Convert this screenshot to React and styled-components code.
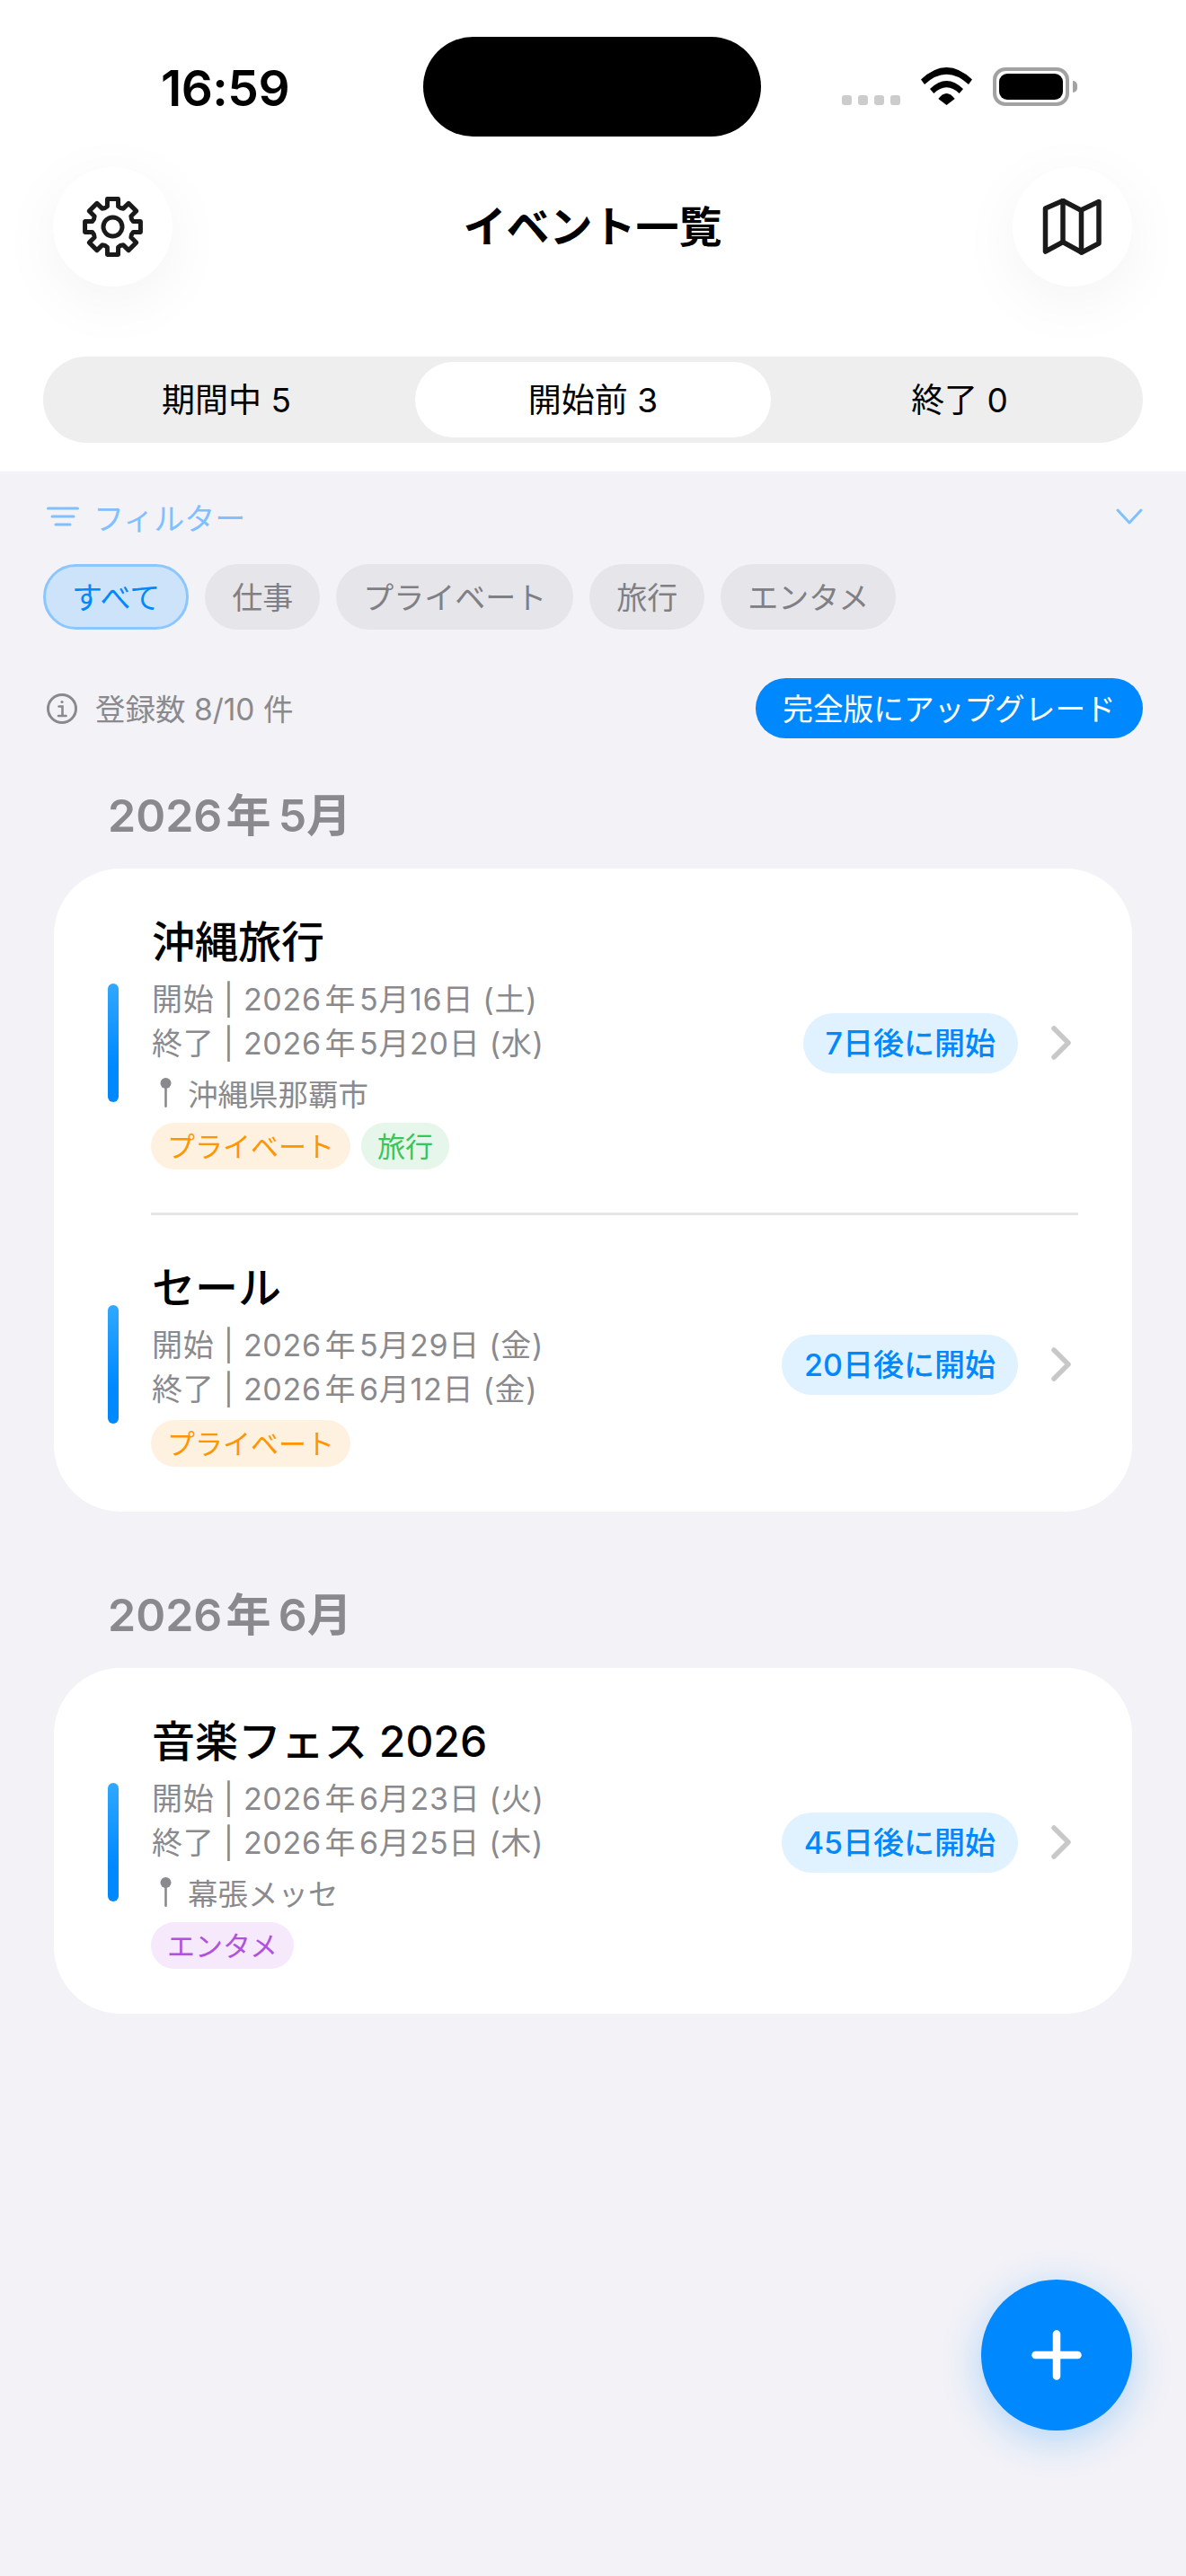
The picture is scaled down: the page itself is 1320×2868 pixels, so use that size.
import React from "react";
import styled, { createGlobalStyle } from "styled-components";

const Global = createGlobalStyle`
  html, body { margin: 0; padding: 0; background: #f2f2f7; }
  body { font-family: Inter, "Noto Sans CJK JP", sans-serif; }
  * { box-sizing: border-box; }
`;

const Page = styled.div`
  position: relative;
  width: 1320px;
  height: 2868px;
  background: #f2f2f7;
  overflow: hidden;
`;
const Top = styled.header`
  background: #fff;
  height: 525px;
  padding-top: 41px;
`;
const StatusBar = styled.div`
  display: grid;
  grid-template-columns: 471px 376px 1fr;
  height: 111px;
`;
const Time = styled.div`
  font-size: 55px;
  font-weight: 600;
  letter-spacing: -0.5px;
  line-height: 60px;
  color: #000;
  text-align: center;
  padding: 27px 0 0 30px;
`;
const Island = styled.div`
  background: #000;
  border-radius: 56px;
`;
const StatusIcons = styled.div`
  display: flex;
  align-items: flex-start;
  padding: 34px 0 0 90px;
`;
const Dots = styled.div`
  display: flex;
  gap: 7px;
  margin-top: 31px;
  margin-right: 23px;
`;
const Dot = styled.span`
  width: 11px;
  height: 11px;
  border-radius: 3px;
  background: #ccc;
`;
const Battery = styled.div`
  position: relative;
  width: 85px;
  height: 43px;
  margin-left: 23px;
  border: 4px solid #a2a2a2;
  border-radius: 14px;
  padding: 3px;
  &::after {
    content: "";
    position: absolute;
    right: -13px;
    top: 11px;
    width: 5px;
    height: 13px;
    background: #a2a2a2;
    border-radius: 0 5px 5px 0;
  }
`;
const BatteryFill = styled.div`
  width: 100%;
  height: 100%;
  background: #000;
  border-radius: 9px;
`;
const HeaderRow = styled.div`
  display: flex;
  align-items: center;
  justify-content: space-between;
  margin: 34px 60px 0 59px;
  height: 133px;
`;
const RoundButton = styled.button`
  width: 133px;
  height: 133px;
  border: 0;
  padding: 0;
  border-radius: 50%;
  background: #fff;
  color: #1a1a1a;
  display: flex;
  align-items: center;
  justify-content: center;
  box-shadow: 0 16px 70px rgba(0, 0, 0, 0.05);
`;
const Title = styled.h1`
  margin: 0 0 7px;
  font-size: 48px;
  font-weight: 600;
  color: #000;
`;
const Segment = styled.div`
  display: grid;
  grid-template-columns: repeat(3, 1fr);
  margin: 78px 48px 0;
  height: 96px;
  border-radius: 48px;
  background: #eeeeee;
`;
const SegmentItem = styled.div`
  margin: 6px;
  padding-bottom: 5px;
  border-radius: 42px;
  background: ${(p) => (p.$active ? "#fff" : "transparent")};
  display: flex;
  align-items: center;
  justify-content: center;
  font-size: 37px;
  font-weight: 400;
  color: #000;
`;
const Content = styled.main`
  padding: 25px 48px 0;
`;
const FilterRow = styled.div`
  display: flex;
  align-items: center;
  height: 50px;
  color: #80c0ff;
  font-size: 34px;
  padding: 0 0 0 4px;
`;
const FilterLabel = styled.span`
  flex: 1;
  margin-left: 16px;
`;
const Chips = styled.div`
  display: flex;
  gap: 18px;
  margin-top: 28px;
`;
const Chip = styled.div`
  height: 73px;
  padding: 0 ${(p) => (p.$active ? "29px" : "30px")} 3px;
  border-radius: 37px;
  display: flex;
  align-items: center;
  font-size: 34px;
  background: ${(p) => (p.$active ? "#cce3f9" : "#e5e5ea")};
  border: ${(p) => (p.$active ? "3px solid #8cc6ff" : "0")};
  color: ${(p) => (p.$active ? "#0088ff" : "#808084")};
`;
const InfoRow = styled.div`
  display: flex;
  align-items: center;
  margin-top: 54px;
  height: 67px;
`;
const InfoIcon = styled.svg`
  margin-left: 3px;
`;
const InfoText = styled.span`
  flex: 1;
  margin-left: 19px;
  padding-bottom: 2px;
  font-size: 33.5px;
  color: #8a8a8e;
`;
const Upgrade = styled.button`
  height: 67px;
  width: 431px;
  border: 0;
  border-radius: 34px;
  background: #0088ff;
  color: #fff;
  font-family: inherit;
  font-size: 33.7px;
  padding: 0 0 2px;
`;
const Month = styled.h2`
  margin: ${(p) => p.$mt}px 0 29px 72px;
  height: 60px;
  line-height: 60px;
  font-size: 50px;
  font-weight: 600;
  color: #8a8a8e;
`;
const Card = styled.section`
  margin: 0 -36px 0 12px;
  width: 1200px;
  border-radius: 74px;
  background: #fff;
`;
const Row = styled.div`
  display: flex;
  align-items: center;
  padding: ${(p) => p.$top}px 67px ${(p) => p.$bottom}px 60px;
`;
const Divider = styled.div`
  height: 3px;
  margin: 0 60px 0 108px;
  background: #e5e5e5;
`;
const Bar = styled.div`
  width: 12px;
  height: 132px;
  border-radius: 6px;
  margin-right: 37px;
  background: linear-gradient(180deg, #30a8ff 0%, #0088ff 70%);
`;
const Info = styled.div`
  flex: 1;
`;
const EventTitle = styled.div`
  height: 58px;
  line-height: 58px;
  font-size: 48px;
  font-weight: 500;
  color: #000;
`;
const Dates = styled.div`
  margin-top: 10px;
  font-size: 34px;
  letter-spacing: 0.7px;
  line-height: 49px;
  color: #8a8a8e;
`;
const Location = styled.div`
  display: flex;
  align-items: center;
  gap: 17px;
  height: 44px;
  margin-top: 10px;
  padding: 0 0 4px 8px;
  font-size: 33.5px;
  color: #8a8a8e;
`;
const Tags = styled.div`
  display: flex;
  gap: 12px;
  margin-top: 10px;
  margin-left: -1px;
`;
const Tag = styled.span`
  height: 52px;
  padding: 0 18px 4px;
  border-radius: 26px;
  display: flex;
  align-items: center;
  font-size: 31px;
  color: ${(p) => p.$fg};
  background: ${(p) => p.$bg};
`;
const Pill = styled.div`
  height: 67px;
  padding: 0 25px 4px;
  border-radius: 34px;
  display: flex;
  align-items: center;
  font-size: 34px;
  font-weight: 500;
  color: #0088ff;
  background: #e0f1ff;
`;
const Chevron = styled.svg`
  margin-left: 36px;
`;
const Fab = styled.button`
  position: absolute;
  left: 1092px;
  top: 2538px;
  width: 168px;
  height: 168px;
  border: 0;
  padding: 0;
  border-radius: 50%;
  background: #0088ff;
  display: flex;
  align-items: center;
  justify-content: center;
  box-shadow: 0 10px 44px rgba(0, 136, 255, 0.28);
`;

const TAGS = {
  private: { label: "プライベート", fg: "#ff9500", bg: "#fff1e0" },
  travel: { label: "旅行", fg: "#34c759", bg: "#e7f6ea" },
  ent: { label: "エンタメ", fg: "#af52de", bg: "#f5e9fb" },
};

const gearPath = (() => {
  const c = 34.5;
  const rO = 31.5;
  const rR = 23.5;
  const rV = 22;
  const dO = 11;
  const dR = 15;
  const pt = (r, deg) => {
    const a = ((deg - 90) * Math.PI) / 180;
    return `${(c + r * Math.cos(a)).toFixed(2)} ${(c + r * Math.sin(a)).toFixed(2)}`;
  };
  let d = "";
  for (let i = 0; i < 8; i++) {
    const a = i * 45;
    d += `${i === 0 ? "M" : "L"}${pt(rR, a - dR)} L${pt(rO, a - dO)} L${pt(rO, a + dO)} L${pt(rR, a + dR)} `;
    d += `Q${pt(rV, a + 22.5)} ${pt(rR, a + 45 - dR)} `;
  }
  return d + "Z";
})();

const GearIcon = () => (
  <svg width="69" height="69" viewBox="0 0 69 69" fill="none" stroke="currentColor" strokeWidth="5" strokeLinejoin="round">
    <path d={gearPath} />
    <circle cx="34.5" cy="34.5" r="10.5" />
  </svg>
);

const FoldedMap = () => (
  <svg width="66" height="63" viewBox="0 0 66 63" fill="none" stroke="currentColor" strokeWidth="5.5" strokeLinejoin="round" strokeLinecap="round">
    <path d="M3.5 11 L23 2.5 L43 13 L63 3.5 V50 L44 60 L23 48.5 L3.5 59 Z" />
    <path d="M23 2.5 V48.5 M43.5 13 V60" />
  </svg>
);

const Pin = () => (
  <svg width="15" height="34" viewBox="0 0 15 34">
    <circle cx="7.5" cy="7" r="6" fill="#8a8a8e" />
    <rect x="6.2" y="10" width="2.6" height="24" rx="1.3" fill="#8a8a8e" />
  </svg>
);

const EventRow = ({ top = 53, bottom = 48, title, start, end, place, tags, pill }) => (
  <Row $top={top} $bottom={bottom}>
    <Bar />
    <Info>
      <EventTitle>{title}</EventTitle>
      <Dates>
        <div>開始 | {start}</div>
        <div>終了 | {end}</div>
      </Dates>
      {place && (
        <Location>
          <Pin />
          {place}
        </Location>
      )}
      <Tags>
        {tags.map((t) => (
          <Tag key={t} $fg={TAGS[t].fg} $bg={TAGS[t].bg}>
            {TAGS[t].label}
          </Tag>
        ))}
      </Tags>
    </Info>
    <Pill>{pill}</Pill>
    <Chevron width="24" height="38" viewBox="0 0 24 38">
      <path d="M4 3 L20 19 L4 35" fill="none" stroke="#c8c8c8" strokeWidth="5.5" strokeLinecap="round" strokeLinejoin="round" />
    </Chevron>
  </Row>
);

export default function App() {
  return (
    <Page>
      <Global />
      <Top>
        <StatusBar>
          <Time>16:59</Time>
          <Island />
          <StatusIcons>
            <Dots>
              <Dot /><Dot /><Dot /><Dot />
            </Dots>
            <svg width="57" height="42" viewBox="0 0 57 42" fill="#000">
              <path d="M0 13.5 Q28.5 -13.5 57 13.5 L53 19 Q28.5 -3.6 4 19 Z" />
              <path d="M10 24 Q28.5 6 47 24 L42.7 29 Q28.5 15.6 14.3 29 Z" />
              <path d="M19.3 35 Q28.5 23 37.7 35 L28.5 42 Z" />
            </svg>
            <Battery><BatteryFill /></Battery>
          </StatusIcons>
        </StatusBar>
        <HeaderRow>
          <RoundButton><GearIcon /></RoundButton>
          <Title>イベント一覧</Title>
          <RoundButton><FoldedMap /></RoundButton>
        </HeaderRow>
        <Segment>
          <SegmentItem>期間中 5</SegmentItem>
          <SegmentItem $active>開始前 3</SegmentItem>
          <SegmentItem>終了 0</SegmentItem>
        </Segment>
      </Top>
      <Content>
        <FilterRow>
          <svg width="36" height="24" viewBox="0 0 36 24" fill="none" stroke="#80c0ff" strokeWidth="3" strokeLinecap="round">
            <path d="M1.5 3 H34.5 M6 12 H30 M10 21 H26" />
          </svg>
          <FilterLabel>フィルター</FilterLabel>
          <svg width="30" height="18" viewBox="0 0 30 18" fill="none" stroke="#80c0ff" strokeWidth="3" strokeLinecap="round" strokeLinejoin="round">
            <path d="M2 2 L15 16 L28 2" />
          </svg>
        </FilterRow>
        <Chips>
          <Chip $active>すべて</Chip>
          <Chip>仕事</Chip>
          <Chip>プライベート</Chip>
          <Chip>旅行</Chip>
          <Chip>エンタメ</Chip>
        </Chips>
        <InfoRow>
          <InfoIcon width="36" height="36" viewBox="0 0 36 36" fill="none" stroke="#8a8a8e" strokeWidth="3" strokeLinecap="round">
            <circle cx="18" cy="18" r="15.5" />
            <path d="M14.5 15.5 H18.5 V26 M14 26 H22.5" strokeWidth="2.6" />
            <circle cx="18" cy="10.5" r="1.6" fill="#8a8a8e" stroke="none" />
          </InfoIcon>
          <InfoText>登録数 8/10 件</InfoText>
          <Upgrade>完全版にアップグレード</Upgrade>
        </InfoRow>
        <Month $mt={56}>{"2026\u200A年\u20095月"}</Month>
        <Card>
          <EventRow
            title="沖縄旅行"
            start={"2026\u200A年\u200A5月16日 (土)"}
            end={"2026\u200A年\u200A5月20日 (水)"}
            place="沖縄県那覇市"
            tags={["private", "travel"]}
            pill="7日後に開始"
          />
          <Divider />
          <EventRow
            top={52}
            bottom={50}
            title="セール"
            start={"2026\u200A年\u200A5月29日 (金)"}
            end={"2026\u200A年\u200A6月12日 (金)"}
            tags={["private"]}
            pill="20日後に開始"
          />
        </Card>
        <Month $mt={85}>{"2026\u200A年\u20096月"}</Month>
        <Card>
          <EventRow
            bottom={50}
            title="音楽フェス 2026"
            start={"2026\u200A年\u200A6月23日 (火)"}
            end={"2026\u200A年\u200A6月25日 (木)"}
            place="幕張メッセ"
            tags={["ent"]}
            pill="45日後に開始"
          />
        </Card>
      </Content>
      <Fab aria-label="追加">
        <svg width="56" height="56" viewBox="0 0 56 56" stroke="#fff" strokeWidth="8.5" strokeLinecap="round">
          <path d="M28 4.5 V51.5 M4.5 28 H51.5" />
        </svg>
      </Fab>
    </Page>
  );
}
